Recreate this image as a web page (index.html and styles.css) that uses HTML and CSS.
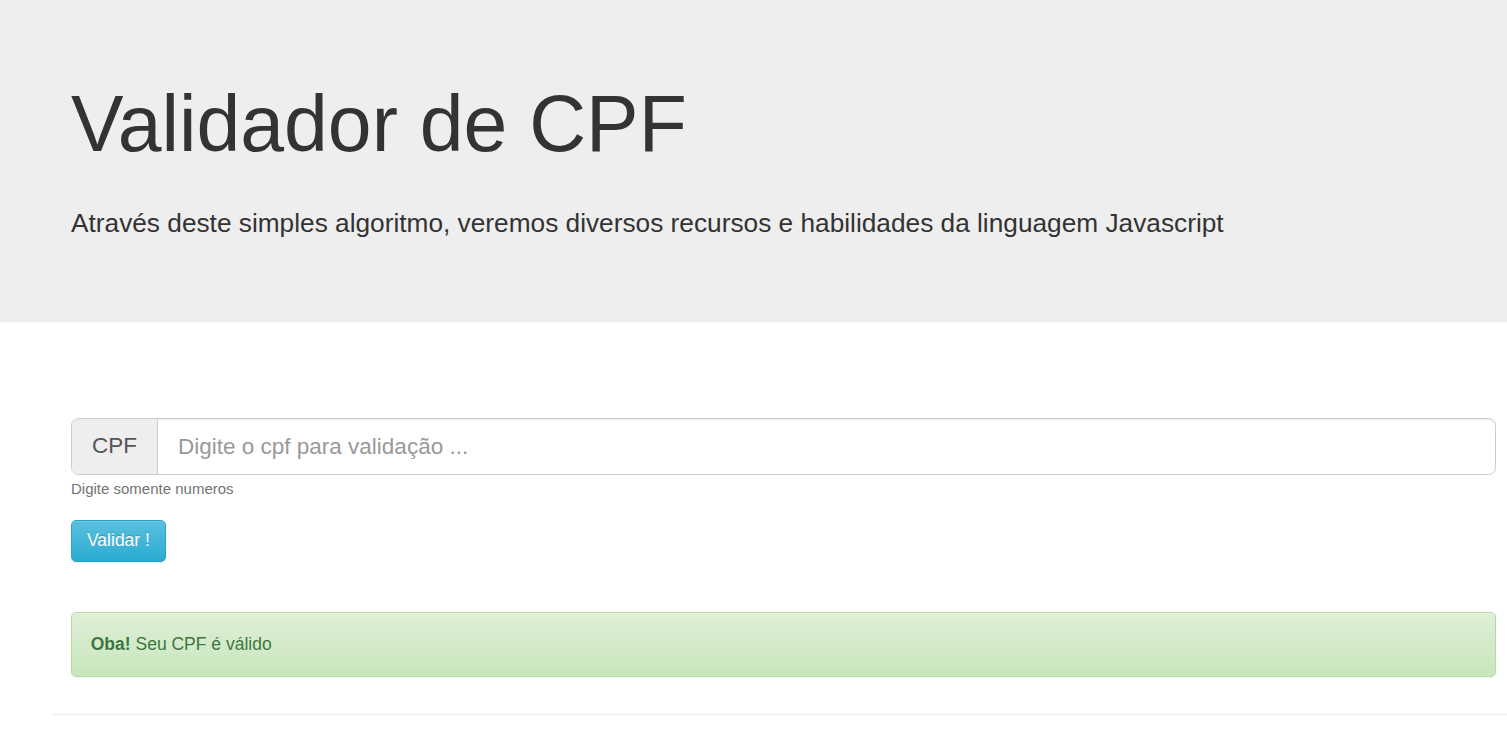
FILE: index.html
```html
<!DOCTYPE html>
<html lang="pt-BR">
<head>
<meta charset="utf-8">
<title>Validador de CPF</title>
<link rel="stylesheet" href="styles.css">
</head>
<body>
  <header class="jumbotron">
    <h1 class="title">Validador de CPF</h1>
    <p class="lead">Através deste simples algoritmo, veremos diversos recursos e habilidades da linguagem Javascript</p>
  </header>
  <main class="content">
    <form class="cpf-form" onsubmit="return false;">
      <div class="input-group">
        <span class="addon">CPF</span>
        <input class="cpf-input" type="text" placeholder="Digite o cpf para validação ...">
      </div>
      <span class="help-block">Digite somente numeros</span>
      <button class="btn-info" type="submit">Validar !</button>
    </form>
    <div class="alert-success"><strong>Oba!</strong> Seu CPF é válido</div>
  </main>
  <hr class="footer-rule">
</body>
</html>
```
FILE: styles.css
```css
* { box-sizing: border-box; }
html, body { margin: 0; padding: 0; }
body {
  font-family: "Liberation Sans", Arial, Helvetica, sans-serif;
  font-size: 17.5px;
  line-height: 1.42857;
  color: #333;
  background: #fff;
  overflow: hidden;
}
.jumbotron {
  background: #eee;
  height: 322px;
  padding: 81px 11px 0 71px;
}
.title {
  margin: 0;
  font-size: 78.75px;
  font-weight: 500;
  line-height: 1.1;
  color: #333;
}
.lead {
  margin: 37px 0 0;
  font-size: 26.25px;
  font-weight: 400;
  line-height: 37.5px;
}
.content {
  padding: 96px 11px 0 71px;
}
.cpf-form { display: flex; flex-direction: column; align-items: flex-start; }
.input-group {
  display: flex;
  width: 100%;
  height: 57px;
  border: 1px solid #ccc;
  border-radius: 7.5px;
  overflow: hidden;
  box-shadow: inset 0 1px 1px rgba(0,0,0,.075);
}
.addon {
  display: flex;
  align-items: center;
  padding: 0 20px;
  background: #eee;
  color: #555;
  font-size: 22.5px;
  border-right: 1px solid #ccc;
}
.cpf-input {
  flex: 1;
  border: 0;
  outline: none;
  padding: 0 20px;
  font-family: inherit;
  font-size: 22.5px;
  color: #555;
  background: transparent;
}
.cpf-input::placeholder { color: #999; }
.help-block {
  display: block;
  margin-top: 3px;
  font-size: 15px;
  line-height: 21px;
  color: #737373;
}
.btn-info {
  margin-top: 21px;
  height: 42px;
  padding: 7px 15px 8px;
  font-family: inherit;
  font-size: 17.5px;
  line-height: 25px;
  color: #fff;
  background: linear-gradient(to bottom, #5bc0de 0, #2aabd2 100%);
  border: 1px solid #28a4c9;
  border-radius: 5px;
  text-shadow: 0 -1px 0 rgba(0,0,0,.2);
  box-shadow: inset 0 1px 0 rgba(255,255,255,.15), 0 1px 1px rgba(0,0,0,.075);
  cursor: pointer;
}
.alert-success {
  margin-top: 50px;
  height: 65px;
  padding: 0 18.75px;
  display: flex;
  align-items: center;
  white-space: pre;
  color: #3c763d;
  background: linear-gradient(to bottom, #dff0d8 0, #c8e5bc 100%);
  border: 1px solid #b2dba1;
  border-radius: 5px;
  text-shadow: 0 1px 0 rgba(255,255,255,.2);
  box-shadow: inset 0 1px 0 rgba(255,255,255,.25), 0 1px 2px rgba(0,0,0,.05);
}
.alert-success strong { font-weight: 700; }
.footer-rule {
  margin: 37px 0 0 52px;
  border: 0;
  border-top: 1px solid #eee;
  height: 0;
}
```
